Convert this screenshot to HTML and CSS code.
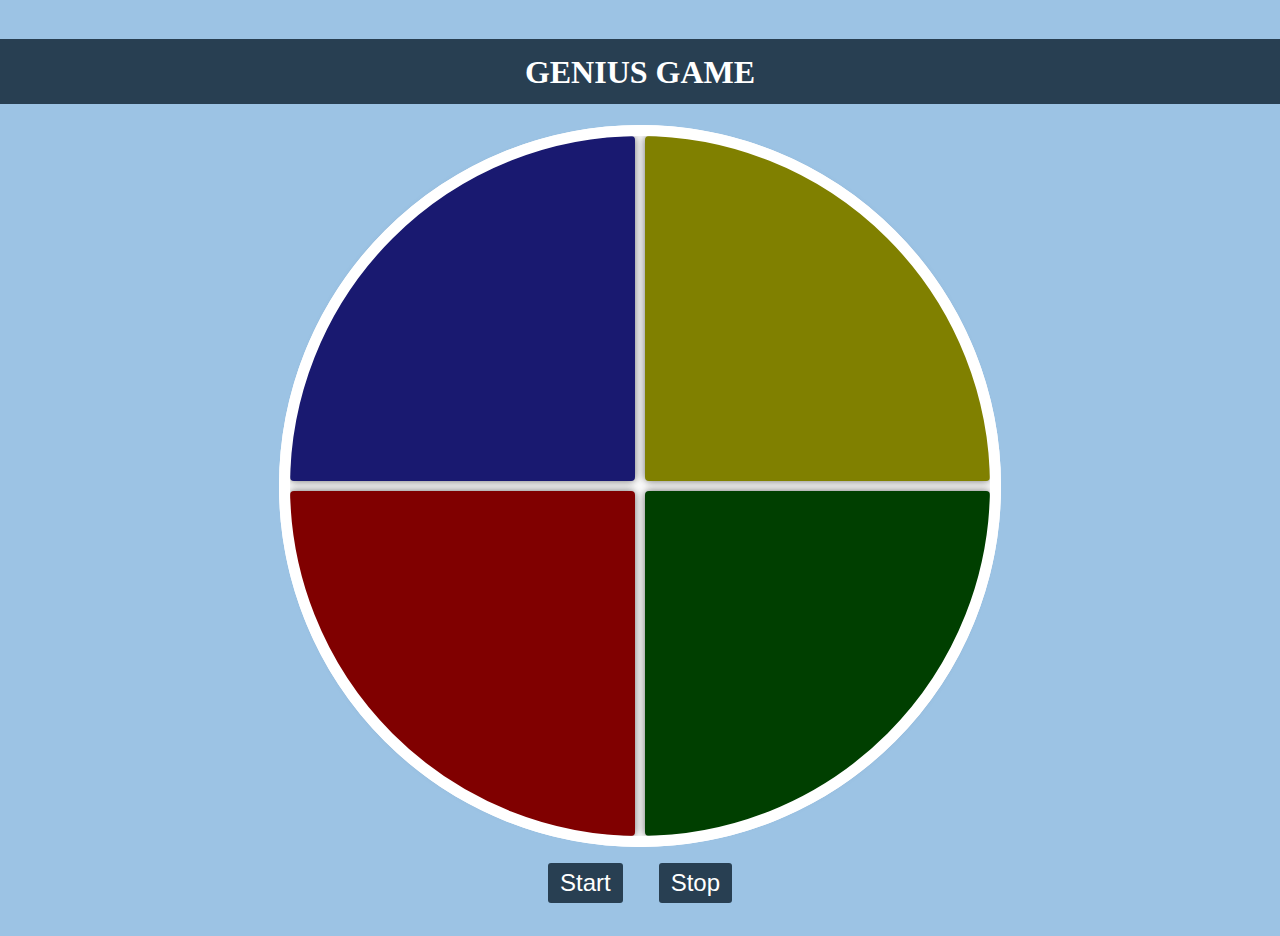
FILE: index.html
```html
<!DOCTYPE html>
<html>
<head>
<meta charset="utf-8">
<title>Genius Game</title>
<link rel="stylesheet" href="styles.css">
</head>
<body>
<header class="topbar"><h1 class="title">GENIUS GAME</h1></header>
<main class="main">
  <div class="genius">
    <div class="pad blue"></div>
    <div class="pad yellow"></div>
    <div class="pad red"></div>
    <div class="pad green"></div>
  </div>
  <div class="controls">
    <button class="btn">Start</button>
    <button class="btn">Stop</button>
  </div>
</main>
</body>
</html>
```
FILE: styles.css
```css
html, body {
  margin: 0;
  padding: 0;
  background: #9cc3e4;
}
body {
  padding-top: 39px;
  font-family: "Liberation Sans", Arial, sans-serif;
}
.topbar {
  background: #283f52;
  height: 65px;
  display: flex;
  align-items: center;
  justify-content: center;
}
.title {
  margin: 0;
  color: #fff;
  font-family: "Liberation Serif", "Times New Roman", serif;
  font-weight: bold;
  font-size: 32px;
  line-height: 1;
}
.main {
  display: flex;
  flex-direction: column;
  align-items: center;
  padding-top: 21px;
}
.genius {
  position: relative;
  width: 722px;
  height: 722px;
  box-sizing: border-box;
  border-radius: 50%;
  background: #fff;
  padding: 11px;
  display: grid;
  grid-template-columns: 345px 345px;
  grid-template-rows: 345px 345px;
  gap: 10px;
}
.genius::after {
  content: "";
  position: absolute;
  inset: 0;
  box-sizing: border-box;
  border: 11px solid #fff;
  border-radius: 50%;
  pointer-events: none;
}
.pad {
  box-shadow: 0 0 8px rgba(0, 0, 0, 0.6);
}
.blue { background: #191970; border-radius: 345px 4px 4px 4px; }
.yellow { background: #808000; border-radius: 4px 345px 4px 4px; }
.red { background: #800000; border-radius: 4px 4px 4px 345px; }
.green { background: #003f00; border-radius: 4px 4px 345px 4px; }
.controls {
  display: flex;
  gap: 36px;
  margin-top: 16px;
}
.btn {
  height: 40px;
  padding: 0 12px;
  border: none;
  border-radius: 3px;
  background: #283f52;
  color: #fff;
  font-family: "Liberation Sans", Arial, sans-serif;
  font-size: 24px;
  cursor: pointer;
}
```
